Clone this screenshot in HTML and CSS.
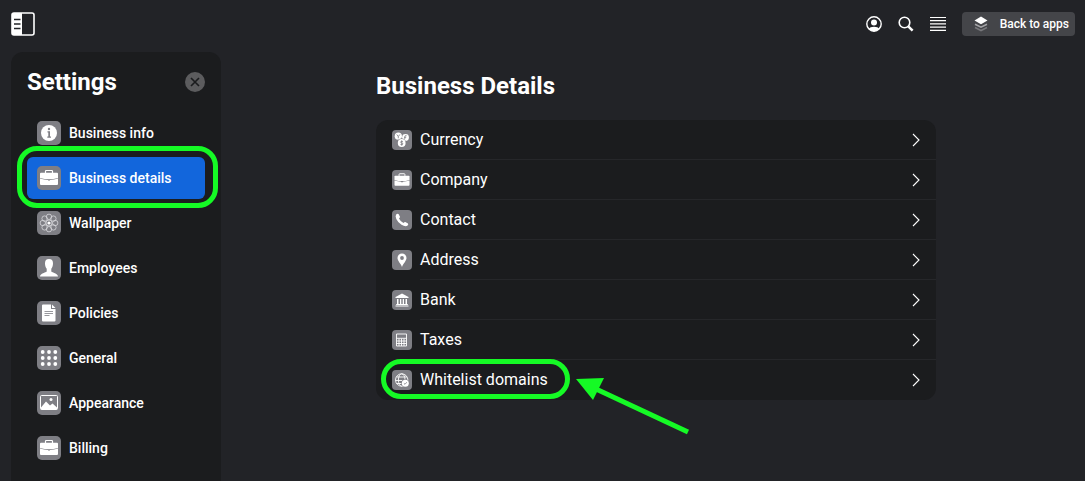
FILE: index.html
```
<!DOCTYPE html>
<html lang="en">
<head>
  <meta charset="utf-8">
  <meta name="viewport" content="width=device-width, initial-scale=1">
  <title>Settings - Business Details</title>
  <link rel="stylesheet" href="styles.css">
</head>
<body>
  <!-- shared icons -->
  <svg class="sprite" aria-hidden="true">
    <symbol id="briefcase" viewBox="0 0 24 24">
      <path d="M8.500 7V5.300Q8.500 4.500 9.300 4.500H14.700Q15.500 4.500 15.500 5.300V7" fill="none" stroke="#fff" stroke-width="1.200"/>
      <path d="M4 6.800H20Q21 6.800 21 7.800V11.900Q12 14.700 3 11.900V7.800Q3 6.800 4 6.800Z"/>
      <path d="M3 12.600Q7 13.900 11 14V14.600H13V14Q17 13.900 21 12.600V18Q21 19 20 19H4Q3 19 3 18Z"/>
    </symbol>
    <symbol id="chevron" viewBox="0 0 8 14">
      <path d="M1 1L7 7L1 13" fill="none" stroke="#fff" stroke-width="1.100"/>
    </symbol>
  </svg>

  <header class="topbar">
    <button type="button" class="icon-btn" aria-label="Toggle sidebar">
      <svg width="24" height="24" viewBox="0 0 24 24">
        <rect x="1" y="1" width="22" height="22" rx="2" fill="none" stroke="#fff" stroke-width="1.600"/>
        <path d="M1 1H11V23H1Z" fill="#fff"/>
        <path d="M3 7.500H9.500M3 12H9.500M3 16.500H9.500" stroke="#222327" stroke-width="1.300"/>
      </svg>
    </button>
    <div class="topbar-actions">
      <button type="button" class="icon-btn" aria-label="Account">
        <svg width="16" height="16" viewBox="0 0 16 16">
          <circle cx="8" cy="8" r="7.200" fill="none" stroke="#fff" stroke-width="1.400"/>
          <circle cx="8" cy="6.500" r="3" fill="#fff"/>
          <path d="M2.800 12.800Q4 10.800 8 10.800T13.200 12.800Q11 15.300 8 15.300T2.800 12.800Z" fill="#fff"/>
        </svg>
      </button>
      <button type="button" class="icon-btn" aria-label="Search">
        <svg width="16" height="16" viewBox="0 0 16 16" fill="none" stroke="#fff">
          <circle cx="6.500" cy="6.500" r="5.300" stroke-width="1.600"/>
          <path d="M10.300 10.300L14.600 14.600" stroke-width="2.500"/>
        </svg>
      </button>
      <button type="button" class="icon-btn" aria-label="Menu">
        <svg width="16" height="16" viewBox="0 0 16 16">
          <path d="M0 1.500H16M0 4.700H16M0 7.900H16M0 11.100H16M0 14.300H16" stroke="#fff" stroke-width="1.200"/>
        </svg>
      </button>
      <button type="button" class="back-btn">
        <svg width="14" height="16" viewBox="0 0 14 16">
          <path d="M1 11.500L7 14.500L13 11.500" fill="none" stroke="#77777b" stroke-width="1.600"/>
          <path d="M1 8.200L7 11.200L13 8.200" fill="none" stroke="#a5a5a8" stroke-width="1.600"/>
          <path d="M7 0.500L13.500 4.500L7 8.200L0.500 4.500Z" fill="#fff"/>
        </svg>
        Back to apps
      </button>
    </div>
  </header>

  <div class="layout">
    <aside class="sidebar">
      <div class="sidebar-header">
        <h1>Settings</h1>
        <button type="button" class="close-btn" aria-label="Close">
          <svg width="10" height="10" viewBox="0 0 10 10"><path d="M1 1L9 9M9 1L1 9" stroke="#1b1c1e" stroke-width="1.700"/></svg>
        </button>
      </div>
      <nav class="nav">
        <a href="#" class="nav-item">
          <svg class="icon" viewBox="0 0 24 24">
            <circle cx="12" cy="12" r="8"/>
            <g class="cut"><circle cx="12" cy="8" r="1.200"/><path d="M10.500 10.300H13V15.500H14V16.700H10.300V15.500H11.300V11.500H10.500Z"/></g>
          </svg>
          Business info
        </a>
        <a href="#" class="nav-item active" aria-current="page">
          <svg class="icon"><use href="#briefcase"/></svg>
          Business details
          <span class="ring nav-ring"></span>
        </a>
        <a href="#" class="nav-item">
          <svg class="icon" viewBox="0 0 24 24">
            <g fill="none" stroke="#d8d8dc" stroke-width="0.800">
              <circle cx="12" cy="5.800" r="2.700"/><circle cx="16.400" cy="7.600" r="2.700"/>
              <circle cx="18.200" cy="12" r="2.700"/><circle cx="16.400" cy="16.400" r="2.700"/>
              <circle cx="12" cy="18.200" r="2.700"/><circle cx="7.600" cy="16.400" r="2.700"/>
              <circle cx="5.800" cy="12" r="2.700"/><circle cx="7.600" cy="7.600" r="2.700"/>
              <circle cx="12" cy="12" r="3"/>
            </g>
            <circle cx="12" cy="12" r="1.600"/>
          </svg>
          Wallpaper
        </a>
        <a href="#" class="nav-item">
          <svg class="icon" viewBox="0 0 24 24">
            <path d="M12 3C14.800 3 16 4.500 16 7.200C16 10 15.300 11.500 14.300 12.700V15.500C15.500 16.700 20.500 17 21 20.500H3C3.500 17 8.500 16.700 9.700 15.500V12.700C8.700 11.500 8 10 8 7.200C8 4.500 9.200 3 12 3Z"/>
          </svg>
          Employees
        </a>
        <a href="#" class="nav-item">
          <svg class="icon" viewBox="0 0 24 24">
            <path d="M6 3.500H14V7.500Q14 8 14.500 8H18.500V19.500Q18.500 20.500 17.500 20.500H6Q5 20.500 5 19.500V4.500Q5 3.500 6 3.500Z"/>
            <path d="M15 3.500L18.500 7H15Z"/>
            <path d="M7.500 10.500H16M7.500 12.500H16M7.500 14.500H12.500" stroke="#7e7e84" stroke-width="0.800"/>
          </svg>
          Policies
        </a>
        <a href="#" class="nav-item">
          <svg class="icon" viewBox="0 0 24 24">
            <circle cx="5.700" cy="6" r="1.900"/><circle cx="12" cy="6" r="1.900"/><circle cx="18.300" cy="6" r="1.900"/>
            <circle cx="5.700" cy="12" r="1.900"/><circle cx="12" cy="12" r="1.900"/><circle cx="18.300" cy="12" r="1.900"/>
            <circle cx="5.700" cy="18" r="1.900"/><circle cx="12" cy="18" r="1.900"/><circle cx="18.300" cy="18" r="1.900"/>
          </svg>
          General
        </a>
        <a href="#" class="nav-item">
          <svg class="icon" viewBox="0 0 24 24">
            <rect x="3.500" y="4.500" width="17" height="14" rx="1" fill="none" stroke="#fff"/>
            <path d="M4 16.500L9 10.500L13 14.500L15.500 12.500L20 16.500V18.500H4Z"/>
            <circle cx="14" cy="8.500" r="1.500"/>
          </svg>
          Appearance
        </a>
        <a href="#" class="nav-item">
          <svg class="icon"><use href="#briefcase"/></svg>
          Billing
        </a>
      </nav>
    </aside>

    <main class="content">
      <h2>Business Details</h2>
      <div class="list">
        <a href="#" class="row">
          <svg class="icon" viewBox="0 0 20 20">
            <circle cx="6.300" cy="6.200" r="3.600"/><circle cx="13.500" cy="7.500" r="3.400"/>
            <circle class="cut" cx="9.700" cy="13" r="4.500"/>
            <circle cx="9.700" cy="13" r="3.900"/>
            <g fill="none" stroke="#7e7e84" stroke-width="0.800">
              <path d="M4.800 4.500L6.300 6.500L7.800 4.500M6.300 6.500V8.300"/>
              <path d="M14.600 5.700Q12.800 5 12.800 7V9M12 7.300H14.200"/>
              <path d="M11 11.700Q8.400 10.800 8.500 12.300Q9.700 13 10.900 13.500Q11.300 15.300 8.400 14.400M9.700 10.300V15.700"/>
            </g>
          </svg>
          <span class="row-body">Currency<svg class="chevron"><use href="#chevron"/></svg></span>
        </a>
        <a href="#" class="row">
          <svg class="icon"><use href="#briefcase"/></svg>
          <span class="row-body">Company<svg class="chevron"><use href="#chevron"/></svg></span>
        </a>
        <a href="#" class="row">
          <svg class="icon" viewBox="0 0 20 20">
            <path d="M4.300 4.300Q5.500 3.200 6.500 4L8 6.700Q8.200 7.500 7 8.500Q8.300 11.500 11.500 13Q12.600 11.700 13.300 12L16 13.600Q16.700 14.500 15.600 15.600Q13.500 17.200 9.500 14.800Q6 12.700 4.300 9Q2.900 5.800 4.300 4.300Z"/>
          </svg>
          <span class="row-body">Contact<svg class="chevron"><use href="#chevron"/></svg></span>
        </a>
        <a href="#" class="row">
          <svg class="icon" viewBox="0 0 20 20">
            <path d="M10 3.500A4.500 4.500 0 0 1 14.500 8C14.500 11 11.500 13 10 17C8.500 13 5.500 11 5.500 8A4.500 4.500 0 0 1 10 3.500Z"/>
            <circle class="cut" cx="10" cy="8" r="1.900"/>
          </svg>
          <span class="row-body">Address<svg class="chevron"><use href="#chevron"/></svg></span>
        </a>
        <a href="#" class="row">
          <svg class="icon" viewBox="0 0 20 20">
            <path d="M10 3.500L16.500 7V8H3.500V7Z"/>
            <path d="M5 9H6.500V14H5ZM8 9H9.300V14H8ZM10.700 9H12V14H10.700ZM13.500 9H15V14H13.500ZM4.200 14H15.800V15H4.200ZM3.500 15.600H16.500V16.600H3.500Z"/>
          </svg>
          <span class="row-body">Bank<svg class="chevron"><use href="#chevron"/></svg></span>
        </a>
        <a href="#" class="row">
          <svg class="icon" viewBox="0 0 20 20">
            <path d="M4.500 4H14.500V16H4.500ZM4.500 8.300H14.500M7 8.500V16M9.500 8.500V16M12 8.500V16M4.500 11H14.500M4.500 13.500H14.500" fill="none" stroke="#fff" stroke-width="0.900"/>
          </svg>
          <span class="row-body">Taxes<svg class="chevron"><use href="#chevron"/></svg></span>
        </a>
        <a href="#" class="row">
          <svg class="icon" viewBox="0 0 20 20">
            <g fill="none" stroke="#fff" stroke-width="0.900">
              <circle cx="9.700" cy="10" r="6.200"/>
              <ellipse cx="9.700" cy="10" rx="3.300" ry="6.200"/>
              <path d="M4.500 7H15M3.500 10.500H16M4.500 13.500H12"/>
            </g>
            <circle class="cut" cx="13.300" cy="13.200" r="4"/>
            <circle cx="13.300" cy="13.200" r="3.500"/>
            <path d="M11.900 13.300L13 14.300L14.800 12.200" fill="none" stroke="#7e7e84" stroke-width="0.800"/>
          </svg>
          <span class="row-body">
            <span class="marked">
              Whitelist domains
              <span class="ring row-ring"></span>
              <svg class="arrow" width="114" height="58" viewBox="0 0 114 58">
                <path d="M20 12L112 55" stroke="#15fa25" stroke-width="5"/>
                <path d="M0 2L28 1L17 23Z" fill="#15fa25"/>
              </svg>
            </span>
            <svg class="chevron"><use href="#chevron"/></svg>
          </span>
        </a>
      </div>
    </main>
  </div>
</body>
</html>
```
FILE: styles.css
```
* {
  box-sizing: border-box;
}

body {
  margin: 0;
  min-height: 100vh;
  display: flex;
  flex-direction: column;
  background-color: #222327;
  color: #fff;
  font-family: Roboto, sans-serif;
}

h1, h2 {
  margin: 0;
  font-size: 24px;
  line-height: 28px;
  font-weight: 700;
}

a {
  color: inherit;
  text-decoration: none;
}

button {
  padding: 0;
  border: none;
  background: none;
  color: inherit;
  font-family: inherit;
  cursor: pointer;
}

svg {
  display: block;
  flex-shrink: 0;
}

.sprite {
  position: absolute;
  width: 0;
  height: 0;
}

/* top bar */
.topbar {
  display: flex;
  align-items: center;
  justify-content: space-between;
  height: 48px;
  padding: 0 10px 0 11px;
}

.topbar-actions {
  display: flex;
  align-items: center;
  gap: 16px;
}

.back-btn {
  display: flex;
  align-items: center;
  gap: 12px;
  height: 24px;
  padding: 0 6px 0 12px;
  border-radius: 4px;
  background-color: #444549;
  font-size: 12px;
  font-weight: 500;
}

/* layout */
.layout {
  display: flex;
  flex: 1;
  gap: 6px;
  padding: 4px 0 0 11px;
}

.sidebar {
  flex: 0 0 210px;
  padding: 0 16px;
  border-radius: 12px 12px 0 0;
  background-color: #1b1c1e;
}

.sidebar-header {
  display: flex;
  align-items: center;
  justify-content: space-between;
  height: 60px;
}

.close-btn {
  display: flex;
  align-items: center;
  justify-content: center;
  width: 20px;
  height: 20px;
  border-radius: 50%;
  background-color: #5c5c5e;
}

.nav {
  display: flex;
  flex-direction: column;
  gap: 3px;
}

.nav-item {
  position: relative;
  display: flex;
  align-items: center;
  gap: 8px;
  height: 42px;
  padding: 0 10px;
  border-radius: 6px;
  font-size: 14px;
  font-weight: 500;
}

.nav-item.active {
  background-color: #1266dc;
}

.icon {
  width: 24px;
  height: 24px;
  border-radius: 5px;
  background-color: #7e7e84;
  fill: #fff;
}

.cut {
  fill: #7e7e84;
}

/* content */
.content {
  flex: 1;
  padding: 20px 16px;
}

.content h2,
.list {
  max-width: 560px;
  margin: 0 auto;
}

.list {
  margin-top: 20px;
  border-radius: 12px;
  background-color: #1b1c1e;
}

.row {
  display: flex;
  align-items: center;
  gap: 8px;
  height: 40px;
  padding-left: 16px;
  font-size: 16px;
}

.row .icon {
  width: 20px;
  height: 20px;
  border-radius: 4px;
}

.row-body {
  display: flex;
  flex: 1;
  align-items: center;
  justify-content: space-between;
  height: 40px;
  padding-right: 16px;
  border-bottom: 1px solid #26272a;
}

.row:last-child .row-body {
  border-bottom-color: transparent;
}

.chevron {
  width: 8px;
  height: 14px;
}

/* highlights */
.ring {
  position: absolute;
  border: 5px solid #15fa25;
  border-radius: 20px;
  pointer-events: none;
}

.nav-ring {
  top: -11px;
  right: -13px;
  bottom: -9px;
  left: -10px;
}

.marked {
  position: relative;
}

.row-ring {
  top: -11px;
  right: -22px;
  left: -39px;
  height: 40px;
}

.arrow {
  position: absolute;
  top: 7px;
  left: calc(100% + 28px);
}
```
